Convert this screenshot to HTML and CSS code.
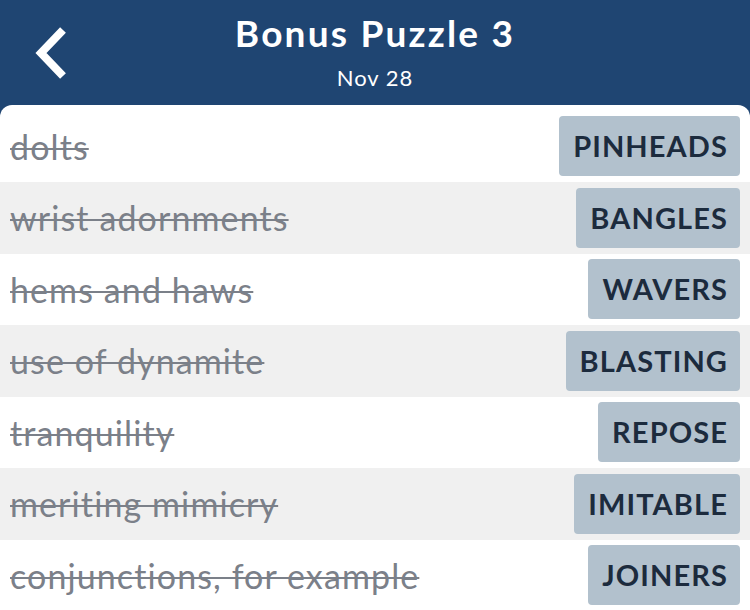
FILE: index.html
```html
<!DOCTYPE html>
<html>
<head>
  <meta charset="UTF-8">
  <title>Bonus Puzzle 3</title>
  <link rel="stylesheet" href="styles.css">
</head>
<body>
  <header class="top-bar">
    <a class="back" href="#">
      <svg width="36" height="54" viewBox="0 0 36 54">
        <path d="M30 4 L8 27 L30 50" fill="none" stroke="#fff" stroke-width="8"/>
      </svg>
    </a>
    <h1>Bonus Puzzle 3</h1>
    <p class="date">Nov 28</p>
  </header>
  <main class="panel">
    <div class="row">
      <span class="clue">dolts</span>
      <span class="answer">PINHEADS</span>
    </div>
    <div class="row">
      <span class="clue">wrist adornments</span>
      <span class="answer">BANGLES</span>
    </div>
    <div class="row">
      <span class="clue">hems and haws</span>
      <span class="answer">WAVERS</span>
    </div>
    <div class="row">
      <span class="clue">use of dynamite</span>
      <span class="answer">BLASTING</span>
    </div>
    <div class="row">
      <span class="clue">tranquility</span>
      <span class="answer">REPOSE</span>
    </div>
    <div class="row">
      <span class="clue">meriting mimicry</span>
      <span class="answer">IMITABLE</span>
    </div>
    <div class="row">
      <span class="clue">conjunctions, for example</span>
      <span class="answer">JOINERS</span>
    </div>
  </main>
</body>
</html>
```

FILE: styles.css
```css
:root {
  --header-color: #1f4572;
  --row-alt: #f0f0f0;
  --clue-color: #7b8089;
  --badge-color: #b2c1cd;
  --badge-text: #1c2b3d;
}
* {
  box-sizing: border-box;
}
body {
  margin: 0;
  background-color: var(--header-color);
  font-family: Lato, 'Open Sans', sans-serif;
  overflow: hidden;
}
.top-bar {
  position: relative;
  height: 105px;
  padding-top: 11px;
  display: flex;
  flex-direction: column;
  align-items: center;
  color: #fff;
}
.back {
  position: absolute;
  left: 33px;
  top: 26px;
  display: block;
}
.top-bar h1 {
  margin: 0;
  font-size: 37px;
  font-weight: 700;
  line-height: 44px;
  letter-spacing: 2.2px;
}
.date {
  margin: 9.5px 0 0;
  font-size: 22px;
  line-height: 26px;
  letter-spacing: 1px;
}
.panel {
  background-color: #fff;
  border-radius: 12px 12px 0 0;
  padding-top: 5.5px;
  height: 505px;
}
.row {
  height: 71.5px;
  display: flex;
  justify-content: space-between;
  align-items: center;
  padding: 0 10px;
}
.row:nth-child(even) {
  background-color: var(--row-alt);
}
.clue {
  font-size: 34px;
  color: var(--clue-color);
  letter-spacing: 1.1px;
  text-decoration: line-through;
  text-decoration-thickness: 2px;
}
.answer {
  background-color: var(--badge-color);
  color: var(--badge-text);
  font-size: 29px;
  font-weight: 700;
  height: 60px;
  line-height: 60px;
  padding: 0 12px 0 14px;
  border-radius: 4px;
  letter-spacing: 1.1px;
}
```
